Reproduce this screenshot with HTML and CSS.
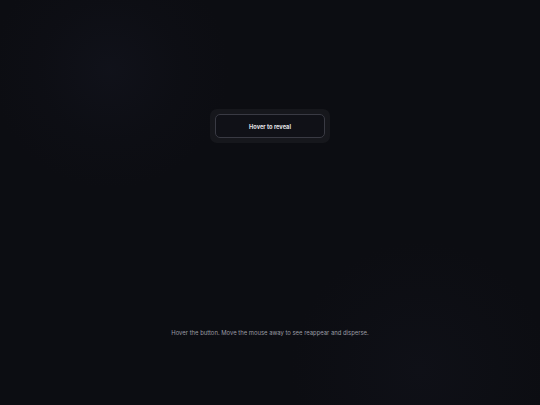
FILE: index.html
```html
<!DOCTYPE html>
<html>
<head>
<meta charset="utf-8">
<link rel="stylesheet" href="styles.css">
</head>
<body>
<main class="stage">
  <div class="glow glow-a"></div>
  <div class="glow glow-b"></div>
  <div class="content">
    <div class="btn-shell">
      <button class="reveal-btn">Hover to reveal</button>
    </div>
    <p class="hint">Hover the button. Move the mouse away to see reappear and disperse.</p>
  </div>
</main>
</body>
</html>
```

FILE: styles.css
```css
html, body {
  margin: 0;
  padding: 0;
  height: 100%;
  background: #0c0d12;
}
.stage {
  position: relative;
  width: 540px;
  height: 405px;
  overflow: hidden;
  background: #0c0d12;
  font-family: Inter, "Noto Sans", sans-serif;
}
.glow {
  position: absolute;
  border-radius: 50%;
  pointer-events: none;
}
.glow-a {
  left: -10px;
  top: -50px;
  width: 240px;
  height: 240px;
  background: radial-gradient(circle at 50% 50%, rgba(26, 28, 44, 0.3) 0%, rgba(20, 22, 34, 0.14) 40%, rgba(12, 13, 18, 0) 70%);
}
.glow-b {
  left: 290px;
  top: 240px;
  width: 260px;
  height: 260px;
  background: radial-gradient(circle at 50% 50%, rgba(22, 24, 36, 0.28) 0%, rgba(18, 20, 30, 0.14) 45%, rgba(12, 13, 18, 0) 70%);
}
.content {
  position: relative;
  display: flex;
  flex-direction: column;
  align-items: center;
  padding-top: 109px;
}
.btn-shell {
  width: 110px;
  padding: 5px;
  background: #16171c;
  border-radius: 7px;
}
.reveal-btn {
  display: block;
  width: 110px;
  height: 24px;
  margin: 0;
  padding: 0;
  box-sizing: border-box;
  background: #101117;
  border: 1px solid #393a43;
  border-radius: 5px;
  color: #e2e2e6;
  font-family: Inter, "Noto Sans", sans-serif;
  font-weight: 700;
  font-size: 5.7px;
}
.hint {
  margin: 186px 0 0;
  color: #9a9ca3;
  font-size: 5.9px;
  line-height: 8px;
}
```
